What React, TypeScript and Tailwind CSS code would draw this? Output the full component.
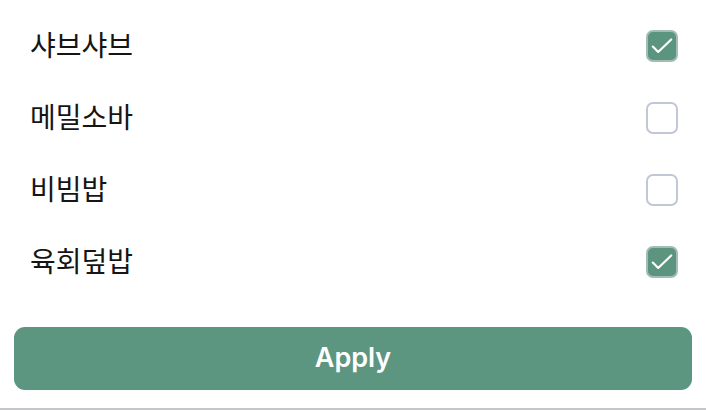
import { useState } from "react";

const items = [
  { label: "샤브샤브", checked: true },
  { label: "메밀소바", checked: false },
  { label: "비빔밥", checked: false },
  { label: "육회덮밥", checked: true },
];

export default function App() {
  const [state, setState] = useState(items);

  const toggle = (i: number) =>
    setState((prev) => prev.map((it, idx) => (idx === i ? { ...it, checked: !it.checked } : it)));

  return (
    <div
      className="w-[706px] h-[410px] bg-white flex flex-col border-b-2 border-[#c4c6ca]"
      style={{ fontFamily: '"Inter", "Noto Sans CJK KR", sans-serif' }}
    >
      <ul className="flex flex-col pt-[10px]">
        {state.map((it, i) => (
          <li key={it.label} className="h-[72px] flex items-center justify-between pl-[30px] pr-[28px]">
            <span className="text-[28px] text-[#151515]">{it.label}</span>
            <button
              onClick={() => toggle(i)}
              className={
                it.checked
                  ? "w-[32px] h-[32px] rounded-[7px] border-2 border-[#a3bcb6] bg-[#5b957f] flex items-center justify-center"
                  : "w-[32px] h-[32px] rounded-[7px] border-2 border-[#c2c7d6] bg-white"
              }
            >
              {it.checked && (
                <svg width="26" height="26" viewBox="0 0 24 24" fill="none">
                  <path d="M3.5 12.5l5 5L20.5 6" stroke="white" strokeWidth="2" strokeLinecap="round" strokeLinejoin="round" />
                </svg>
              )}
            </button>
          </li>
        ))}
      </ul>
      <div className="px-[14px] mt-[29px]">
        <button className="w-full h-[63px] rounded-[11px] bg-[#5c9580] text-white text-[27px] font-semibold">
          Apply
        </button>
      </div>
    </div>
  );
}
